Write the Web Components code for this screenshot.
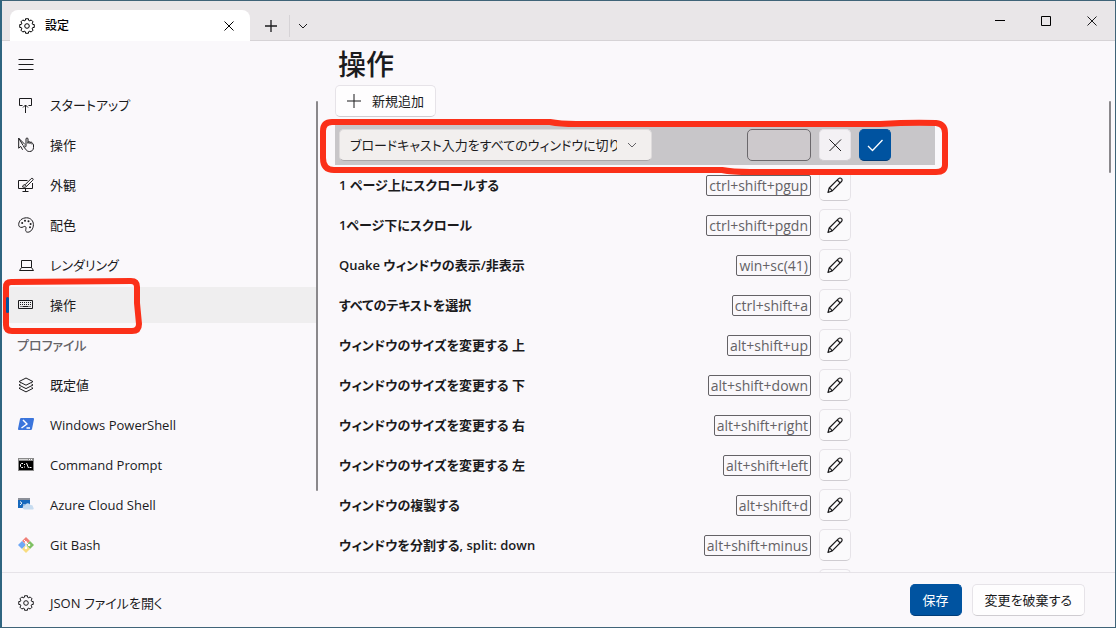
<!DOCTYPE html>
<html lang="ja">
<head>
<meta charset="utf-8">
<title>設定</title>
<style>
html, body {
  height: 100%;
  margin: 0;
}
body {
  --accent: #0053a0;
  --ink: #1b1b1d;
  --muted: #646266;
  --pane: #faf8fb;
  --line: #e6e3e8;
  font: 13px/20px "Open Sans", "Noto Sans CJK JP", sans-serif;
  font-feature-settings: "palt";
  color: var(--ink);
}
</style>
</head>
<body>
<settings-window>
  <title-bar slot="titlebar">設定</title-bar>

  <side-nav slot="nav">
    <nav-item icon="startup">スタートアップ</nav-item>
    <nav-item icon="touch">操作</nav-item>
    <nav-item icon="appearance">外観</nav-item>
    <nav-item icon="palette">配色</nav-item>
    <nav-item icon="laptop">レンダリング</nav-item>
    <nav-item icon="keyboard" selected>操作<red-mark slot="mark" shape="nav"></red-mark></nav-item>
    <nav-heading>プロファイル</nav-heading>
    <nav-item icon="layers">既定値</nav-item>
    <nav-item icon="powershell">Windows PowerShell</nav-item>
    <nav-item icon="cmd">Command Prompt</nav-item>
    <nav-item icon="azure">Azure Cloud Shell</nav-item>
    <nav-item icon="git">Git Bash</nav-item>
  </side-nav>

  <actions-page>
    <span slot="title">操作</span>
    <edit-row>ブロードキャスト入力をすべてのウィンドウに切り替え<red-mark slot="mark" shape="row"></red-mark></edit-row>
    <action-row keys="ctrl+shift+pgup">1 ページ上にスクロールする</action-row>
    <action-row keys="ctrl+shift+pgdn">1ページ下にスクロール</action-row>
    <action-row keys="win+sc(41)">Quake ウィンドウの表示/非表示</action-row>
    <action-row keys="ctrl+shift+a">すべてのテキストを選択</action-row>
    <action-row keys="alt+shift+up">ウィンドウのサイズを変更する 上</action-row>
    <action-row keys="alt+shift+down">ウィンドウのサイズを変更する 下</action-row>
    <action-row keys="alt+shift+right">ウィンドウのサイズを変更する 右</action-row>
    <action-row keys="alt+shift+left">ウィンドウのサイズを変更する 左</action-row>
    <action-row keys="alt+shift+d">ウィンドウの複製する</action-row>
    <action-row keys="alt+shift+minus">ウィンドウを分割する, split: down</action-row>
    <action-row></action-row>
  </actions-page>

  <save-bar slot="footer"></save-bar>
</settings-window>

<script>
// outline of a cog with eight rounded teeth, in a 16x16 box
function gearPath() {
  var pts = []
  for (var i = 0; i < 8; i++) {
    var base = i * Math.PI / 4 - Math.PI / 2
    var steps = [[-0.27, 5.9], [-0.2, 7.4], [0.2, 7.4], [0.27, 5.9]]
    steps.forEach(function(s) {
      pts.push((8 + Math.cos(base + s[0]) * s[1]).toFixed(2) + ' ' + (8 + Math.sin(base + s[0]) * s[1]).toFixed(2))
    })
  }
  return 'M' + pts.join('L') + 'Z'
}

var icons = {
  gear: `<path d="${gearPath()}"/><circle cx="8" cy="8" r="2.3"/>`,
  menu: `<path d="M.5 2.5h15M.5 7.5h15M.5 12.5h15"/>`,
  close: `<path d="M3.500 3.500l9 9M12.500 3.500l-9 9"/>`,
  cancel: `<path d="M2.500 2.500l11.500 11.500M14 2.500L2.500 14"/>`,
  plus: `<path d="M8 2v12M2 8h12" stroke-width="1.300"/>`,
  bigplus: `<path d="M8 1v14M1 8h14"/>`,
  chevron: `<path d="M4 6l4 4 4-4"/>`,
  minimize: `<path d="M3 7.500h10" stroke="#000"/>`,
  maximize: `<path d="M3.500 3.500h9v9h-9z" stroke="#000"/>`,
  check: `<path d="M1 9l4.500 4.500L15.500 3" stroke-width="1.300"/>`,
  pencil: `<path d="M1 15.500l1.200-4.500L11.600 1.600a2 2 0 0 1 2.900 0a2 2 0 0 1 0 2.900L5.200 13.900zM10.200 3l2.900 2.900M2.200 11q2.100.7 3 2.900" stroke-width="1.200"/>`,
  startup: `<path d="M4.500 8.500h-3v-7h12v7h-3M7.500 16V8M5 10.500L7.500 8l2.500 2.500"/>`,
  touch: `<path d="M5.200 8.600L.7 1.200v10l2-1.800 1.900 3.400M.7 1.200L7 7.500"/><path d="M8 9.500V2a1 1 0 0 1 2 0v4.400V5.600a1 1 0 0 1 2 0v1V6a1 1 0 0 1 2 0v1.200a.8.8 0 0 1 1.500.3v3c0 2.600-1.700 4-4 4-2 0-2.800-.8-3.800-2.200L5.400 9.400c.9-.8 1.700-.2 2.600.8"/>`,
  appearance: `<path d="M9.500 3.500h-9v8h14V6M7.500 11.500V14M4.500 14.500h6"/><path d="M7 7.800l6.200-6.200a1.100 1.100 0 0 1 1.600 1.600L8.600 9.300zM7 7.800c-1.600-.2-2.200.7-2.400 2.200 1.600.5 3.400.3 4-.7"/>`,
  palette: `<path d="M8.600.8c4 0 6.800 3 6.800 6.800 0 4.200-2.600 7.600-5.600 7.600-1.900 0-2.400-1.300-2-2.800.5-1.900.2-2.900-1.100-3-1-.1-1.500.8-2.700 1C1.600 10.600.7 9.300.7 7.600.7 3.600 4.200.8 8.600.8z"/><g fill="currentColor" stroke="none"><circle cx="4.200" cy="6" r="1"/><circle cx="7" cy="3.800" r="1"/><circle cx="10.500" cy="4.200" r="1"/><circle cx="12.600" cy="7" r="1"/><circle cx="12" cy="10.300" r="1"/></g>`,
  laptop: `<path d="M3.500 3.500h10v7h-10zM1.500 13.500h14M3.500 10.500l-2 3M13.500 10.500l2 3"/>`,
  keyboard: `<path d="M.5 3.500h14v8H.5z"/><path d="M2 5.500h11M2 7.500h11" stroke-dasharray="1 1"/><path d="M2.500 9.500h1M4.500 9.500h6M11.500 9.500h1"/>`,
  layers: `<path d="M8 1l7 3.600-7 3.600-7-3.600zM2.500 7L1 8l7 3.600L15 8l-1.500-1M2.500 10.300L1 11.300l7 3.600 7-3.600-1.500-1"/>`,
  powershell: `<path d="M3.200 1H15a1 1 0 0 1 1 1.200l-2 9.800a1.300 1.300 0 0 1-1.200 1H1a1 1 0 0 1-1-1.200L2 2a1.300 1.300 0 0 1 1.200-1z" fill="#3b75dc" stroke="none"/><path d="M5 3l4 4-5.500 4M8.500 11H12" stroke="#fff" stroke-width="1.500"/>`,
  cmd: `<path d="M0 1h16v13H0z" fill="#8a8a8a" stroke="none"/><path d="M1 4h14v9H1z" fill="#000" stroke="none"/><path d="M1 2h9v1H1z" fill="#d4d4d4" stroke="none"/><path d="M11 2.500h1M13 2.500h1" stroke="#fff"/><path d="M5 6.500H3.500L2.500 7.500v2l1 1H5M6.500 7v1M6.500 9.500v1M8.500 6l2 5M11.500 10.500h2" stroke="#fff"/>`,
  azure: `<path d="M0 1h12v10H0z" fill="#1769bd" stroke="none"/><path d="M0 1h12v2H0z" fill="#8c9099" stroke="none"/><path d="M2 4.500l2 1.700L2 8M5 8h2.500" stroke="#fff"/><path d="M6.500 12.500a2 2 0 0 1 .3-4A3.100 3.100 0 0 1 12.500 8a2.300 2.300 0 0 1 2.600 2.300 1.200 1.200 0 0 1-.3 2.200z" fill="#c7dcf0" stroke="none"/>`,
  git: `<g stroke="none"><path d="M8 0l4 4-4 4-4-4z" fill="#f08078"/><path d="M4 4l4 4-4 4-4-4z" fill="#6fa8f5"/><path d="M12 4l4 4-4 4-4-4z" fill="#7ec063"/><path d="M8 8l4 4-4 4-4-4z" fill="#f8dc80"/></g><path d="M6 3l2 2v6M8 5l3 3" stroke="#fff"/><g fill="#fff" stroke="none"><circle cx="8" cy="5.500" r="1.300"/><circle cx="11" cy="8" r="1.300"/><circle cx="8" cy="11" r="1.300"/></g>`
}

// shared by every element that has buttons
var buttonStyles = `
button {
  box-sizing: border-box;
  display: flex;
  align-items: center;
  justify-content: center;
  height: 32px;
  padding: 0;
  border: 1px solid var(--line);
  border-bottom-color: #cfccd1;
  border-radius: 5px;
  background: #fefdfe;
  color: inherit;
  font: inherit;
  font-feature-settings: inherit;
}
button.accent {
  background: var(--accent);
  border-color: var(--accent);
  border-bottom-color: #003c78;
  color: #fff;
}
`

class BaseElement extends HTMLElement {
  connectedCallback() {
    if (this.shadowRoot) return
    this.attachShadow({mode: 'open'}).innerHTML = this.render()
  }
}

class UiIcon extends BaseElement {
  render() {
    return `
<style>
:host { display: block; flex: none; width: 16px; height: 16px; }
svg { display: block; width: 100%; height: 100%; fill: none; stroke: currentColor; stroke-linejoin: round; overflow: visible; }
</style>
<svg viewBox="0 0 16 16" aria-hidden="true">${icons[this.getAttribute('name')]}</svg>`
  }
}

// freehand red outline drawn round its parent
class RedMark extends BaseElement {
  render() {
    var row = this.getAttribute('shape') == 'row'
    var size = row ? [630, 58] : [140, 58]
    var path = row
      ? 'M12 3H230Q240 5 256 5H560Q592 3 616 4Q625 5 625 14V46Q625 53 616 53H430Q412 53 402 51H14Q3 51 3 39V12Q3 3 12 3Z'
      : 'M8 4L128 3Q134 3 134 9V25L136 46Q136 53 129 53H9Q3 53 3 47V9Q3 4 8 4Z'
    return `
<style>
:host { display: block; position: absolute; z-index: 2; pointer-events: none; left: ${row ? -15 : 1}px; top: ${row ? -6 : -9}px; }
svg { display: block; fill: none; stroke: #fb3019; stroke-width: 6; stroke-linejoin: round; }
</style>
<svg width="${size[0]}" height="${size[1]}" aria-hidden="true"><path d="${path}"/></svg>`
  }
}

class SettingsWindow extends BaseElement {
  render() {
    return `
<style>
:host {
  box-sizing: border-box;
  display: grid;
  grid-template: auto minmax(0, 1fr) auto / 316px minmax(0, 1fr);
  height: 100vh;
  border: 1px solid #3f6478;
  border-left: 2px solid #2f6580;
  background: var(--pane);
}
slot[name=titlebar], slot[name=footer] { display: block; grid-column: 1 / -1; }
slot[name=nav], slot:not([name]) { display: grid; min-height: 0; }
</style>
<slot name="titlebar"></slot>
<slot name="nav"></slot>
<slot></slot>
<slot name="footer"></slot>`
  }
}

class TitleBar extends BaseElement {
  render() {
    return `
<style>
:host {
  box-sizing: border-box;
  display: flex;
  align-items: flex-end;
  height: 40px;
  padding-left: 8px;
  background: #e9e6e8;
  box-shadow: inset 0 -1px #d6d3d6;
}
button { display: flex; align-items: center; justify-content: center; padding: 0; border: 0; background: none; color: inherit; }
.tab {
  box-sizing: border-box;
  display: flex;
  align-items: center;
  gap: 10px;
  width: 240px;
  height: 31px;
  padding: 0 13px 0 9px;
  border-radius: 8px 8px 0 0;
  background: #fff;
  font-size: 12px;
  font-weight: 500;
  color: #000;
}
.tab span { flex: 1; }
.new { width: 36px; height: 31px; margin-left: 3px; }
.more { width: 26px; height: 22px; margin-bottom: 4px; border-left: 1px solid #d6d3d6; }
.controls { display: flex; align-self: stretch; margin-left: auto; }
.controls button { width: 46px; }
</style>
<div class="tab">
  <ui-icon name="gear"></ui-icon>
  <span><slot></slot></span>
  <button aria-label="タブを閉じる"><ui-icon name="close"></ui-icon></button>
</div>
<button class="new" aria-label="新しいタブ"><ui-icon name="plus"></ui-icon></button>
<button class="more" aria-label="新しいタブのメニュー"><ui-icon name="chevron"></ui-icon></button>
<div class="controls">
  <button aria-label="最小化"><ui-icon name="minimize"></ui-icon></button>
  <button aria-label="最大化"><ui-icon name="maximize"></ui-icon></button>
  <button aria-label="閉じる"><ui-icon name="close"></ui-icon></button>
</div>`
  }
}

class SideNav extends BaseElement {
  render() {
    return `
<style>
:host { display: block; position: relative; overflow: hidden; }
.menu { display: flex; padding: 16px 16px 12px; border: 0; background: none; color: inherit; }
nav { display: flex; flex-direction: column; gap: 4px; padding-top: 2px; }
.thumb { position: absolute; right: 0; top: 60px; width: 2px; height: 390px; background: #8a888b; border-radius: 1px; }
</style>
<button class="menu" aria-label="ナビゲーション"><ui-icon name="menu"></ui-icon></button>
<nav><slot></slot></nav>
<div class="thumb"></div>`
  }
}

class NavItem extends BaseElement {
  render() {
    return `
<style>
:host { display: block; position: relative; }
a {
  display: flex;
  align-items: center;
  gap: 16px;
  height: 36px;
  padding: 0 16px;
  color: inherit;
  text-decoration: none;
}
:host([selected]) a { background: #efeeef; }
:host([selected]) a::before {
  content: "";
  position: absolute;
  z-index: 3;
  left: 4px;
  width: 3px;
  height: 16px;
  border-radius: 2px;
  background: var(--accent);
}
</style>
<a href="#"><ui-icon name="${this.getAttribute('icon')}"></ui-icon><span><slot></slot></span></a>
<slot name="mark"></slot>`
  }
}

class NavHeading extends BaseElement {
  render() {
    return `
<style>
:host { display: flex; align-items: center; height: 36px; padding-left: 15px; color: var(--muted); font-weight: 500; }
</style>
<slot></slot>`
  }
}

class ActionsPage extends BaseElement {
  render() {
    return `
<style>
${buttonStyles}
:host { display: block; position: relative; overflow: hidden; padding-left: 17px; }
h1 { margin: 0; padding: 5px 3px 3px; font-size: 28px; line-height: 36px; font-weight: 500; }
.add { gap: 10px; padding: 0 11px 0 10px; margin-bottom: 8px; }
.list { max-width: 600px; }
.thumb { position: absolute; right: 4px; top: 60px; width: 2px; height: 72px; background: #8a888b; border-radius: 1px; }
</style>
<h1><slot name="title"></slot></h1>
<button class="add"><ui-icon name="bigplus"></ui-icon>新規追加</button>
<div class="list"><slot></slot></div>
<div class="thumb"></div>`
  }
}

// label | keys | button | button
var rowStyles = `
:host {
  box-sizing: border-box;
  display: grid;
  grid-template-columns: minmax(0, 1fr) auto 32px 32px;
  align-items: center;
  column-gap: 8px;
  height: 40px;
  padding: 0 44px 0 4px;
}
`

class EditRow extends BaseElement {
  render() {
    return `
<style>
${buttonStyles}
${rowStyles}
:host { position: relative; background: #c8c6c9; }
button { background: #f3f1f4; }
label { position: relative; display: block; width: 313px; }
select {
  appearance: none;
  box-sizing: border-box;
  display: block;
  width: 100%;
  height: 32px;
  padding: 0 34px 0 10px;
  border: 1px solid #dedbdc;
  border-bottom-color: #a9a6a9;
  border-radius: 5px;
  background: #f2efee;
  color: inherit;
  font: inherit;
  font-feature-settings: inherit;
}
label ui-icon { position: absolute; right: 12px; top: 8px; color: var(--muted); }
input {
  box-sizing: border-box;
  width: 64px;
  height: 32px;
  border: 1px solid #6b686c;
  border-radius: 5px;
  background: #cdc9cc;
  font: inherit;
}
</style>
<label><select aria-label="操作"><option></option></select><ui-icon name="chevron"></ui-icon></label>
<input type="text" aria-label="キー">
<button aria-label="キャンセル"><ui-icon name="cancel"></ui-icon></button>
<button class="accent" aria-label="同意する"><ui-icon name="check"></ui-icon></button>
<slot name="mark"></slot>`
  }
  connectedCallback() {
    super.connectedCallback()
    this.shadowRoot.querySelector('option').textContent = this.firstChild.textContent
  }
}

class ActionRow extends BaseElement {
  render() {
    var keys = this.getAttribute('keys')
    return `
<style>
${buttonStyles}
${rowStyles}
.name { font-weight: 600; white-space: nowrap; }
kbd {
  grid-column: 2;
  box-sizing: border-box;
  height: 21px;
  padding: 0 2px;
  border: 1px solid var(--muted);
  border-radius: 2px;
  color: var(--muted);
  font: inherit;
  font-size: 14px;
}
button { grid-column: 3; background: #fbfafc; }
</style>
<span class="name"><slot></slot></span>
${keys ? `<kbd>${keys}</kbd>` : ''}
<button aria-label="編集"><ui-icon name="pencil"></ui-icon></button>`
  }
}

class SaveBar extends BaseElement {
  render() {
    return `
<style>
${buttonStyles}
:host {
  display: flex;
  align-items: flex-start;
  gap: 10px;
  padding: 11px 30px 11px 16px;
  border-top: 1px solid var(--line);
}
a { display: flex; align-items: center; gap: 16px; height: 38px; margin: 0 auto -6px 0; color: inherit; text-decoration: none; }
button { padding: 0 12px; }
</style>
<a href="#"><ui-icon name="gear"></ui-icon>JSON ファイルを開く</a>
<button class="accent">保存</button>
<button>変更を破棄する</button>`
  }
}

customElements.define('ui-icon', UiIcon)
customElements.define('red-mark', RedMark)
customElements.define('settings-window', SettingsWindow)
customElements.define('title-bar', TitleBar)
customElements.define('side-nav', SideNav)
customElements.define('nav-item', NavItem)
customElements.define('nav-heading', NavHeading)
customElements.define('actions-page', ActionsPage)
customElements.define('edit-row', EditRow)
customElements.define('action-row', ActionRow)
customElements.define('save-bar', SaveBar)
</script>
</body>
</html>
